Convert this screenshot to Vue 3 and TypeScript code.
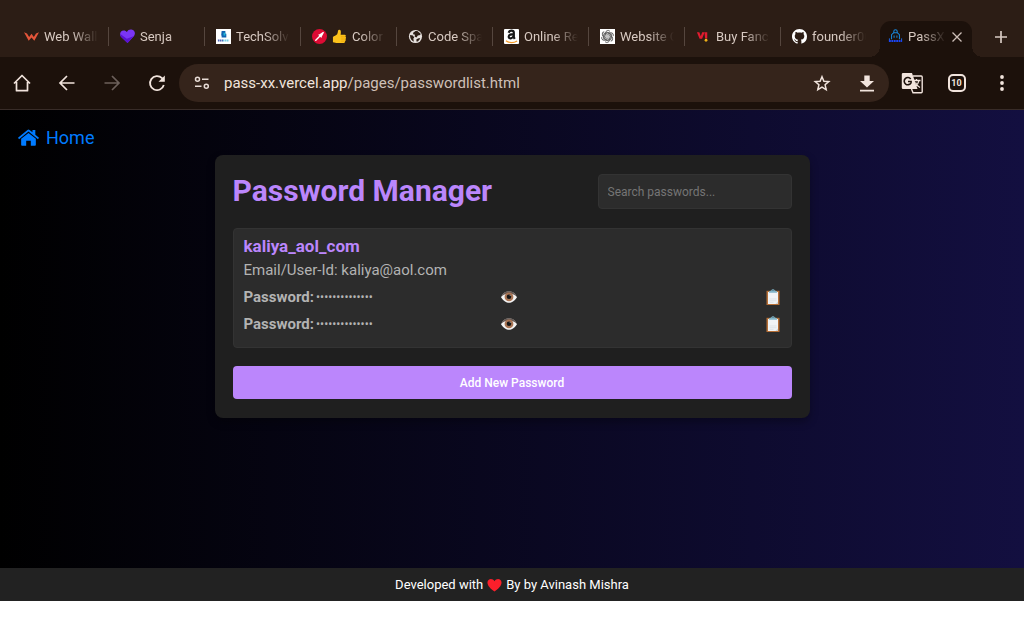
<script setup lang="ts">
import { computed, ref } from 'vue'

interface Tab {
  id: string
  title: string
}

interface Entry {
  site: string
  user: string
  secrets: string[]
}

const tabs: Tab[] = [
  { id: 'wall', title: 'Web Wall' },
  { id: 'senja', title: 'Senja' },
  { id: 'tech', title: 'TechSolv' },
  { id: 'color', title: 'Color' },
  { id: 'code', title: 'Code Spa' },
  { id: 'amazon', title: 'Online Re' },
  { id: 'gpt', title: 'Website G' },
  { id: 'vi', title: 'Buy Fanc' },
  { id: 'github', title: 'founder00' },
]

const petals = [0, 60, 120, 180, 240, 300]

const url = ref('pass-xx.vercel.app/pages/passwordlist.html')
const urlHost = computed(() => url.value.split('/')[0])
const urlPath = computed(() => url.value.slice(urlHost.value.length))

const query = ref('')
const revealed = ref<Record<string, boolean>>({})
const entries: Entry[] = [
  { site: 'kaliya_aol_com', user: 'kaliya@aol.com', secrets: ['kaliya12345678', 'kaliya12345678'] },
]
const shown = computed(() => entries.filter((e) => e.site.includes(query.value.toLowerCase())))

function toggle(key: string): void {
  revealed.value[key] = !revealed.value[key]
}
</script>

<template>
  <div class="browser">
    <nav class="tabstrip" aria-label="Tabs">
      <button v-for="tab in tabs" :key="tab.id" class="tab" type="button">
        <svg v-if="tab.id === 'wall'" class="favicon" viewBox="0 0 16 16">
          <path d="M0 3.500l3.200 1.300 2.300 3.700L8 5l2.500 3.500 2.300-3.700L16 3.500 11 12.500 8 9l-3 3.500z" fill="#e4553a" />
        </svg>
        <svg v-else-if="tab.id === 'senja'" class="favicon" viewBox="0 0 16 16">
          <path d="M8 15L1 8.200C-1 5 .6 1.500 4 1.500c1.500 0 2.700.7 3.300 1.700C8.300 1 10.300.2 12.200.5c3.300.4 4.800 4 2.800 7z" fill="#7a35f5" />
          <path d="M8 15L1 8.200C.4 7.200.2 6.200.3 5.200l7 5.300L15 7.500z" fill="#5a12d0" />
        </svg>
        <svg v-else-if="tab.id === 'tech'" class="favicon" viewBox="0 0 16 16">
          <path d="M0 0h16v16H0z" fill="#fff" />
          <path d="M6 2h4v3h1v4H6V7H5.500z" fill="#1263b0" />
          <path d="M8 4h2v3H8z" fill="#24b8d8" />
          <path d="M2 12.300h5.500" stroke="#4b63b8" stroke-width="2.200" stroke-dasharray="1.500 .5" />
          <path d="M7.500 12.300H14" stroke="#72cbe3" stroke-width="2.200" stroke-dasharray="1.500 .5" />
        </svg>
        <svg v-else-if="tab.id === 'color'" class="favicon" viewBox="0 0 16 16">
          <circle cx="8" cy="8" r="8" fill="#dd0b34" />
          <path d="M4 12l4.500-4.500" stroke="#fff" stroke-width="1.500" stroke-linecap="round" />
          <path d="M6.500 6l1.500-.5 4-2.500.8.700L10.500 8l-.5 1.500z" fill="#fff" />
        </svg>
        <svg v-else-if="tab.id === 'code'" class="favicon" viewBox="0 0 16 16">
          <circle cx="8" cy="8" r="7" fill="#e6e0dd" />
          <path d="M2.200 6.500l3 .5 1.500 2-1 1 .5 3.500C3.500 12.500 2 10 2.200 6.500zM8 2.200l2-.2 3.500 3-.5 1.500-2.500.5-1.500 2-2-1 .5-2-2-.5V4z M9 11l3-1.500 1 1-2.500 2.700H9z" fill="#2c1d15" />
        </svg>
        <svg v-else-if="tab.id === 'amazon'" class="favicon" viewBox="0 0 16 16">
          <rect width="16" height="16" rx="1" fill="#fff" />
          <path d="M5 4C5.500 1 10.500 1 10.500 4v5l1 1.500M10 5.500C7 5.500 5 6.500 5 8.300c0 2.600 4.500 2.200 5.200-.8" fill="none" stroke="#171717" stroke-width="2.300" />
          <path d="M2 12.500c4 2.700 8 2.700 12 .3" fill="none" stroke="#f49b2a" stroke-width="1.400" />
        </svg>
        <svg v-else-if="tab.id === 'gpt'" class="favicon" viewBox="0 0 16 16">
          <path d="M0 0h16v16H0z" fill="#fff" />
          <circle cx="8" cy="8" r="5.200" fill="#c4c4c4" />
          <g fill="none" stroke="#5c5c5c" stroke-width="1">
            <path v-for="a in petals" :key="a" d="M6 6.800V4.200a2.600 2.600 0 014.600-1.700M6.200 4.800L8.500 3.500 11 5" :transform="`rotate(${a} 8 8)`" />
          </g>
        </svg>
        <svg v-else-if="tab.id === 'vi'" class="favicon" viewBox="0 0 16 16">
          <path d="M1 3.500h2.600l1.500 4.300 1.500-4.300h2.600L6.500 10.500H3.800z" fill="#e01b2f" />
          <path d="M9 3.500h3v6.700H9.700z" fill="#e01b2f" />
          <circle cx="10.700" cy="12" r="1.500" fill="#efb018" />
        </svg>
        <svg v-else class="favicon" viewBox="0 0 16 16">
          <path fill="#fff" d="M8 0C3.580 0 0 3.580 0 8c0 3.540 2.290 6.530 5.470 7.590.4.070.55-.17.55-.38 0-.19-.01-.82-.01-1.490-2.010.37-2.530-.49-2.690-.94-.09-.23-.48-.94-.82-1.130-.28-.15-.68-.52-.01-.53.63-.01 1.080.58 1.230.82.72 1.210 1.870.87 2.330.66.07-.52.28-.87.51-1.070-1.780-.2-3.640-.89-3.640-3.950 0-.87.31-1.590.82-2.150-.08-.2-.36-1.020.08-2.120 0 0 .67-.21 2.200.82.64-.18 1.320-.27 2-.27s1.360.09 2 .27c1.530-1.040 2.200-.82 2.200-.82.44 1.100.16 1.920.08 2.120.51.56.82 1.270.82 2.150 0 3.070-1.870 3.750-3.650 3.950.29.25.54.73.54 1.480 0 1.070-.01 1.930-.01 2.200 0 .21.15.46.55.38A8 8 0 0016 8c0-4.420-3.580-8-8-8z" />
        </svg>
        <svg v-if="tab.id === 'color'" class="favicon" viewBox="0 0 16 16">
          <path d="M1 8.500C2 7 4.500 7 5.500 5.500 6.500 4 6 1 7.500.8c2-.2 2.300 2 1.700 5.200h4.300c1.500 0 1.700 1.800.6 2.300 1.300.4 1.200 2 .1 2.400.9.500.7 1.900-.3 2.200.5 1-.3 2-1.400 2H6c-2 0-3-.9-5-.9z" fill="#fcc21b" />
          <path d="M9.500 8.300h4.600M9.800 10.700h4.300M9.800 13h4" stroke="#e59600" stroke-width=".6" />
        </svg>
        <span class="tab-title">{{ tab.title }}</span>
      </button>
      <div class="tab active">
        <svg class="favicon" viewBox="0 0 16 16">
          <g fill="none" stroke="#1787dc">
            <path d="M6.200 4V2.500a1.800 1.800 0 013.600 0V4M3.800 11V6L6 4h4l2.200 2v5" stroke-width="1.100" />
            <path d="M6.500 6.800v2.500M9.500 6.800v2.500" stroke-width="1.100" />
          </g>
          <path d="M1.500 10v3.500M14.500 10v3.500" stroke="#1b6cf0" stroke-width="1" />
          <path d="M1 12.800h14" stroke="#1b45f4" stroke-width="2.200" stroke-dasharray="2 .6" />
        </svg>
        <span class="tab-title">PassX</span>
        <button class="close" type="button" aria-label="Close tab">
          <svg viewBox="0 0 12 12"><path d="M1.500 1.500l9 9M10.500 1.500l-9 9" stroke="#cdbfb8" stroke-width="1.300" /></svg>
        </button>
      </div>
      <button class="new-tab" type="button" aria-label="New tab">
        <svg viewBox="0 0 14 14"><path d="M7 1v12M1 7h12" stroke="#d8cac2" stroke-width="1.700" /></svg>
      </button>
    </nav>

    <div class="toolbar">
      <div class="nav-tools">
        <button class="tool" type="button" aria-label="Home page">
          <svg viewBox="0 0 20 20"><path d="M2 10.500L10 2.500l8 8M4.500 9v8.700h11V9" fill="none" stroke="#f1e4dd" stroke-width="1.700" stroke-linejoin="round" /></svg>
        </button>
        <button class="tool" type="button" aria-label="Back">
          <svg viewBox="0 0 20 20"><path d="M17.500 10h-14M10 3l-7 7 7 7" fill="none" stroke="#f1e4dd" stroke-width="1.700" /></svg>
        </button>
        <button class="tool" type="button" aria-label="Forward" disabled>
          <svg viewBox="0 0 20 20"><path d="M2.500 10h14M10 3l7 7-7 7" fill="none" stroke="#6c605b" stroke-width="1.700" /></svg>
        </button>
        <button class="tool" type="button" aria-label="Reload">
          <svg viewBox="0 0 20 20">
            <path d="M16.800 12A7 7 0 1115 5.200l1.500 1.600" fill="none" stroke="#f1e4dd" stroke-width="1.800" />
            <path d="M17.800 2.500v6.300h-6.300z" fill="#f1e4dd" />
          </svg>
        </button>
      </div>
      <div class="omnibox">
        <button class="site-info" type="button" aria-label="Site information">
          <svg viewBox="0 0 16 14">
            <g fill="none" stroke="#e8dcd6" stroke-width="1.500">
              <circle cx="3.500" cy="3.200" r="2" /><path d="M8 3.200h6.500M1 10.200h6.500" /><circle cx="12.300" cy="10.200" r="2" />
            </g>
          </svg>
        </button>
        <a class="address" href="#">{{ urlHost }}<span class="path">{{ urlPath }}</span></a>
        <button class="tool" type="button" aria-label="Bookmark">
          <svg viewBox="0 0 20 20"><path d="M10 3.700l1.900 4.500 4.900.4-3.700 3.200 1.100 4.800-4.200-2.500-4.200 2.500 1.100-4.800-3.700-3.200 4.900-.4z" fill="none" stroke="#f1e4dd" stroke-width="1.500" /></svg>
        </button>
        <button class="tool" type="button" aria-label="Download">
          <svg viewBox="0 0 20 20"><path d="M7.300 2.500h5.400v5.500H17l-7 6.500L3 8h4.300zM3 16.700h14v1.800H3z" fill="#f1e4dd" /></svg>
        </button>
      </div>
      <button class="tool" type="button" aria-label="Translate">
        <svg class="translate" viewBox="0 0 22 22">
          <path d="M2 1h9l5.500 16H2a1.200 1.200 0 01-1.200-1.200V2A1.200 1.200 0 012 1z" fill="#f1e4dd" />
          <path d="M12 4h8.200a1 1 0 011 1v14.700a1 1 0 01-1 1H12L10.500 17" fill="none" stroke="#f1e4dd" stroke-width="1.400" />
          <path d="M9.700 7A3.600 3.600 0 1010 10.800c.1-.4.100-.9.100-1.300H7" fill="none" stroke="#1c110b" stroke-width="1.600" />
          <path d="M13 8.500h6.500M15.500 7v1.500M18 8.500c-.5 3-2.500 5-4 6M14.500 10.500c1 2.500 2.500 4 4.500 5" fill="none" stroke="#f1e4dd" stroke-width="1.300" />
        </svg>
      </button>
      <button class="tool" type="button" aria-label="10 open tabs"><span class="tab-count">10</span></button>
      <button class="tool" type="button" aria-label="Menu">
        <svg viewBox="0 0 20 20" fill="#f1e4dd"><circle cx="10" cy="4" r="1.900" /><circle cx="10" cy="10" r="1.900" /><circle cx="10" cy="16" r="1.900" /></svg>
      </button>
    </div>

    <div class="page">
      <a class="home" href="#">
        <svg viewBox="0 0 20 16" fill="#007bff">
          <path d="M0 8.300L9 .8q1-.8 2 0l2.800 2.300V.8h2.700v4.600L20 8.300l-1 1.300-9-7.400-9 7.400z" />
          <path d="M3 9.300l7-5.700 7 5.700V15q0 .8-.8.800h-4V11H7.800v4.800h-4q-.8 0-.8-.8z" />
        </svg>
        Home
      </a>

      <main class="card">
        <header class="card-head">
          <h1>Password Manager</h1>
          <input v-model="query" class="search" type="text" placeholder="Search passwords..." aria-label="Search passwords" />
        </header>

        <section v-for="entry in shown" :key="entry.site" class="entry">
          <h2>{{ entry.site }}</h2>
          <p>Email/User-Id: {{ entry.user }}</p>
          <div v-for="(secret, i) in entry.secrets" :key="i" class="secret-row">
            <div class="secret">
              <label :for="`${entry.site}-${i}`">Password:</label>
              <input :id="`${entry.site}-${i}`" :type="revealed[`${entry.site}-${i}`] ? 'text' : 'password'" :value="secret" readonly />
            </div>
            <button type="button" aria-label="Show password" @click="toggle(`${entry.site}-${i}`)">
              <svg viewBox="0 0 16 16">
                <path d="M0 8.300C2.500 3.500 5 2.500 8 2.500s5.500 1 8 5.800C13 12.500 11 13.800 8 13.800S3 12.500 0 8.300z" fill="#f3f3f3" />
                <path d="M.2 7.800C2.500 3.300 5 2.300 8 2.300s5.500 1 7.800 5.500C12.500 3.800 3.500 3.800.2 7.800z" fill="#665a55" />
                <circle cx="8" cy="7.900" r="4.400" fill="#a97555" />
                <circle cx="8" cy="7.700" r="2.300" fill="#171717" />
                <circle cx="9.200" cy="6.500" r=".6" fill="#aaa" />
              </svg>
            </button>
            <button type="button" aria-label="Copy password">
              <svg viewBox="0 0 16 16">
                <path d="M1.500 1.800h13V16h-13z" fill="#b66f36" />
                <path d="M3 3h10v12H3z" fill="#f1f3f5" />
                <path d="M4.500 10h7M4.500 11.700h7M4.500 13.400h4" stroke="#d9dee3" stroke-width=".7" />
                <path d="M10.500 15l2.500-2.500V15z" fill="#cdd3d8" />
                <path d="M4 3.800V2.300L6.300 1.500a1.750 1.750 0 013.400 0l2.300.8v1.500z" fill="#82b5c8" />
                <circle cx="8" cy="1.500" r=".6" fill="#37606f" />
              </svg>
            </button>
          </div>
        </section>

        <button class="add" type="button">Add New Password</button>
      </main>
    </div>

    <footer class="footer">
      Developed with
      <svg viewBox="0 0 16 14" aria-label="love"><path d="M8 14C4 11 .5 8 .5 4.300.5.200 6-.9 8 3c2-3.900 7.500-2.800 7.500 1.300C15.500 8 12 11 8 14z" fill="#fb1f2b" /></svg>
      By by Avinash Mishra
    </footer>
  </div>
</template>

<style>
body {
  background: #fff;
}
</style>

<style scoped>
.browser {
  min-height: 100vh;
  box-sizing: border-box;
  display: flex;
  flex-direction: column;
  padding-bottom: 39px;
  font-family: Roboto, 'Liberation Sans', sans-serif;
}
.browser * {
  box-sizing: border-box;
}
button {
  border: 0;
  padding: 0;
  background: none;
  font: inherit;
  color: inherit;
}
svg {
  display: block;
  flex: none;
}

.tabstrip {
  display: flex;
  height: 57px;
  padding: 21px 0 0 13px;
  background: #2c1d15;
  color: #d8cac2;
  font-size: 13px;
}
.tab {
  position: relative;
  display: flex;
  flex: 1;
  align-items: center;
  gap: 5px;
  min-width: 0;
  height: 31px;
  padding: 0 11px;
}
.tab + .tab:not(.active)::before {
  content: '';
  position: absolute;
  left: -1px;
  top: 6px;
  width: 1px;
  height: 19px;
  background: #55463e;
}
.favicon {
  width: 15px;
  height: 15px;
}
.tab-title {
  flex: 1;
  min-width: 0;
  overflow: hidden;
  white-space: nowrap;
  text-align: left;
  mask-image: linear-gradient(to right, #000 calc(100% - 26px), transparent);
}
.tab.active {
  flex: none;
  width: 92px;
  height: 36px;
  margin-left: 3px;
  padding: 0 9px 5px 8px;
  border-radius: 11px 11px 0 0;
  background: #1c110b;
}
.tab.active::before,
.tab.active::after {
  content: '';
  position: absolute;
  bottom: 0;
  width: 11px;
  height: 11px;
}
.tab.active::before {
  right: 100%;
  background: radial-gradient(circle at 0 0, transparent 11px, #1c110b 11px);
}
.tab.active::after {
  left: 100%;
  background: radial-gradient(circle at 100% 0, transparent 11px, #1c110b 11px);
}
.close svg {
  width: 12px;
  height: 12px;
}
.new-tab {
  display: grid;
  place-items: center;
  width: 52px;
  height: 31px;
  padding-left: 6px;
}
.new-tab svg {
  width: 14px;
  height: 14px;
}

.toolbar {
  display: flex;
  align-items: center;
  height: 53px;
  background: #1c110b;
  border-bottom: 1px solid #382c28;
}
.nav-tools {
  display: flex;
  width: 179px;
}
.tool {
  display: grid;
  place-items: center;
  width: 45px;
  height: 38px;
}
.nav-tools .tool {
  flex: 1;
}
.tool svg {
  width: 20px;
  height: 20px;
}
.tool .translate {
  width: 22px;
  height: 22px;
}
.tab-count {
  display: grid;
  place-items: center;
  width: 18px;
  height: 18px;
  border: 2px solid #f1e4dd;
  border-radius: 5px;
  color: #f1e4dd;
  font-size: 9px;
  font-weight: 700;
}
.omnibox {
  display: flex;
  flex: 1;
  align-items: center;
  height: 38px;
  padding-left: 15px;
  border-radius: 19px;
  background: #35241b;
}
.site-info svg {
  width: 16px;
  height: 14px;
}
.address {
  flex: 1;
  padding-left: 14px;
  color: #f1e4dd;
  font-size: 15px;
  text-decoration: none;
}
.path {
  color: #cfc0b8;
}

.page {
  flex: 1;
  padding: 14px 18px 40px;
  background: linear-gradient(to right, #000, #130f40);
}
.home {
  display: flex;
  align-items: center;
  gap: 7px;
  width: max-content;
  height: 26px;
  color: #007bff;
  font-size: 18px;
  text-decoration: none;
}
.home svg {
  width: 21px;
  height: 17px;
}
.card {
  max-width: 595px;
  margin: 5px auto 0;
  padding: 19px 18px;
  border-radius: 8px;
  background: #1f1f1f;
  box-shadow: 0 4px 8px rgba(0, 0, 0, 0.3);
}
.card-head {
  display: flex;
  align-items: center;
  justify-content: space-between;
  margin-bottom: 19px;
}
h1 {
  margin: 0;
  padding-bottom: 2px;
  color: #bb86fc;
  font-size: 30px;
  line-height: 33px;
}
.search {
  width: 194px;
  height: 35px;
  padding: 0 9px;
  border: 1px solid #333;
  border-radius: 4px;
  background: #2c2c2c;
  color: #e0e0e0;
  font: 12px Roboto, sans-serif;
}
.search::placeholder {
  color: #757575;
}
.entry {
  margin-bottom: 18px;
  padding: 6px 10px 10px;
  border: 1px solid #333;
  border-radius: 4px;
  background: #2c2c2c;
  color: #b3b3b3;
  font-size: 15px;
}
h2 {
  margin: 0;
  color: #bb86fc;
  font-size: 17px;
  line-height: 23px;
}
.entry p {
  margin: 0;
  line-height: 25px;
}
.secret-row {
  display: grid;
  grid-template-columns: 257px auto 1fr;
  align-items: center;
  height: 27px;
}
.secret {
  display: flex;
  align-items: center;
}
.secret label {
  font-weight: 700;
}
.secret input {
  width: 120px;
  padding: 0 2px;
  border: 0;
  background: none;
  color: #b3b3b3;
  font: 12px Roboto, sans-serif;
}
.secret-row button:last-child {
  justify-self: end;
}
.secret-row svg {
  width: 16px;
  height: 16px;
}
.add {
  display: block;
  width: 100%;
  height: 33px;
  border-radius: 4px;
  background: #bb86fc;
  color: #fff;
  font-size: 12px;
  font-weight: 500;
}

.footer {
  display: flex;
  align-items: center;
  justify-content: center;
  gap: 4px;
  height: 33px;
  background: #222;
  color: #fff;
  font-size: 13px;
}
.footer svg {
  width: 15px;
  height: 14px;
}
</style>
